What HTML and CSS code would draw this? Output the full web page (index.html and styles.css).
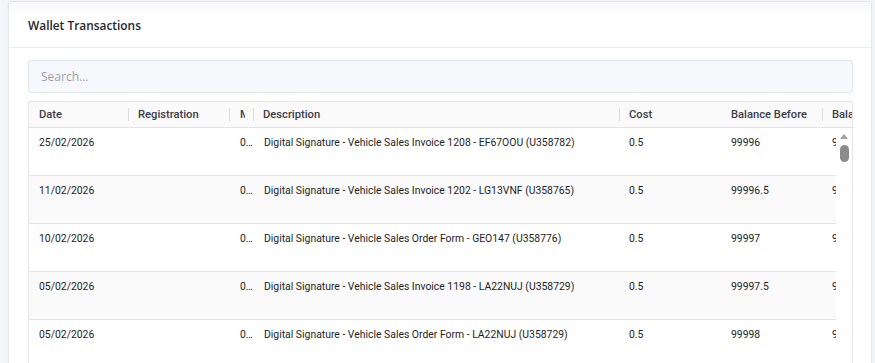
FILE: index.html
```html
<!DOCTYPE html>
<html lang="en">
<head>
    <meta charset="UTF-8">
    <title>Wallet Transactions</title>
    <link rel="stylesheet" href="styles.css">
</head>
<body>
    <div class="card">
        <div class="card-header">
            <h1>Wallet Transactions</h1>
        </div>
        <div class="card-body">
            <input type="text" class="search" placeholder="Search...">

            <div class="grid">
                <div class="grid-head">
                    <div class="th">Date</div>
                    <div class="th sep">Registration</div>
                    <div class="th sep narrow"><span>Mileage</span></div>
                    <div class="th sep">Description</div>
                    <div class="th sep">Cost</div>
                    <div class="th">Balance Before</div>
                    <div class="th sep">Balance After</div>
                </div>

                <div class="grid-body">
                    <div class="rows">
                        <div class="tr">
                            <div class="td">25/02/2026</div>
                            <div class="td"></div>
                            <div class="td">0.00</div>
                            <div class="td">Digital Signature - Vehicle Sales Invoice 1208 - EF67OOU (U358782)</div>
                            <div class="td">0.5</div>
                            <div class="td">99996</div>
                            <div class="td">99995.5</div>
                        </div>
                        <div class="tr">
                            <div class="td">11/02/2026</div>
                            <div class="td"></div>
                            <div class="td">0.00</div>
                            <div class="td">Digital Signature - Vehicle Sales Invoice 1202 - LG13VNF (U358765)</div>
                            <div class="td">0.5</div>
                            <div class="td">99996.5</div>
                            <div class="td">99996</div>
                        </div>
                        <div class="tr">
                            <div class="td">10/02/2026</div>
                            <div class="td"></div>
                            <div class="td">0.00</div>
                            <div class="td">Digital Signature - Vehicle Sales Order Form - GEO147 (U358776)</div>
                            <div class="td">0.5</div>
                            <div class="td">99997</div>
                            <div class="td">99996.5</div>
                        </div>
                        <div class="tr">
                            <div class="td">05/02/2026</div>
                            <div class="td"></div>
                            <div class="td">0.00</div>
                            <div class="td">Digital Signature - Vehicle Sales Invoice 1198 - LA22NUJ (U358729)</div>
                            <div class="td">0.5</div>
                            <div class="td">99997.5</div>
                            <div class="td">99997</div>
                        </div>
                        <div class="tr">
                            <div class="td">05/02/2026</div>
                            <div class="td"></div>
                            <div class="td">0.00</div>
                            <div class="td">Digital Signature - Vehicle Sales Order Form - LA22NUJ (U358729)</div>
                            <div class="td">0.5</div>
                            <div class="td">99998</div>
                            <div class="td">99997.5</div>
                        </div>
                    </div>
                    <div class="scrollbar">
                        <span class="scroll-up"></span>
                        <span class="scroll-thumb"></span>
                    </div>
                </div>
            </div>
        </div>
    </div>
</body>
</html>
```

FILE: styles.css
```css
* {
    box-sizing: border-box;
    margin: 0;
    padding: 0;
}

body {
    font-family: Roboto, Arial, sans-serif;
    background: #f4f5f8;
    padding: 1px 3px 0 8px;
    height: 363px;
    overflow: hidden;
}

.card {
    background: white;
    border: 1px solid #e6e8ee;
    border-radius: 3px;
    box-shadow: 0 0 3px rgba(0,0,0,0.04);
}

.card-header {
    height: 46px;
    padding: 1px 19px 0;
    display: flex;
    align-items: center;
    border-bottom: 1px solid #eceef3;
    background: linear-gradient(#f8f8fa, #ffffff 14px);
}

.card-header h1 {
    font-family: 'Open Sans', Arial, sans-serif;
    font-size: 11.9px;
    font-weight: 600;
    color: #26262e;
}

.card-body {
    padding: 12px 18px 0 19px;
}

.search {
    display: block;
    width: 100%;
    height: 33px;
    padding: 0 12px;
    border: 1px solid #e1e5ee;
    border-radius: 3px;
    background: #f7f8fb;
    font-family: 'Open Sans', Arial, sans-serif;
    font-size: 12px;
    color: #333;
    outline: none;
}

.search::placeholder {
    color: #9aa0ae;
}

.grid {
    margin-top: 8px;
    border: 1px solid #e4e6ec;
    border-bottom: none;
    font-size: 10.4px;
}

.grid-head,
.tr {
    display: grid;
    grid-template-columns: 99px 101px 24px 366px 102px 101px 60px;
}

.grid-head {
    height: 26px;
    background: #fafafa;
    border-bottom: 1px solid #e2e2e2;
    overflow: hidden;
}

.th {
    position: relative;
    padding: 0 10px;
    line-height: 25px;
    font-size: 11.2px;
    font-weight: 500;
    color: #3c3c48;
    white-space: nowrap;
    overflow: hidden;
}

.th.sep::before {
    content: '';
    position: absolute;
    left: 0;
    top: 6px;
    height: 13px;
    width: 1px;
    background: #dcdcdc;
}

.th.narrow {
    padding: 0 0 0 11px;
}

.th.narrow span {
    display: block;
    width: 5px;
    overflow: hidden;
}

.grid-body {
    display: flex;
}

.rows {
    width: 809px;
    overflow: hidden;
}

.tr {
    height: 48px;
    border-bottom: 1px solid #e4e4e4;
}

.tr:nth-child(even) {
    background: #fafafa;
}

.td {
    padding: 7px 10px 0;
    line-height: 16px;
    color: #1e1e24;
    white-space: nowrap;
    overflow: hidden;
    text-overflow: ellipsis;
}

.tr .td:nth-child(3) {
    padding: 7px 0 0 11px;
}

.tr .td:nth-child(4) {
    padding-left: 11px;
}

.scrollbar {
    width: 16px;
    display: flex;
    flex-direction: column;
    align-items: center;
    padding-top: 6px;
    background: white;
}

.scroll-up {
    width: 0;
    height: 0;
    border-left: 4px solid transparent;
    border-right: 4px solid transparent;
    border-bottom: 5px solid #a3a3a3;
}

.scroll-thumb {
    margin-top: 6px;
    width: 9px;
    height: 17px;
    border-radius: 5px;
    background: #8c8c8c;
}
```
